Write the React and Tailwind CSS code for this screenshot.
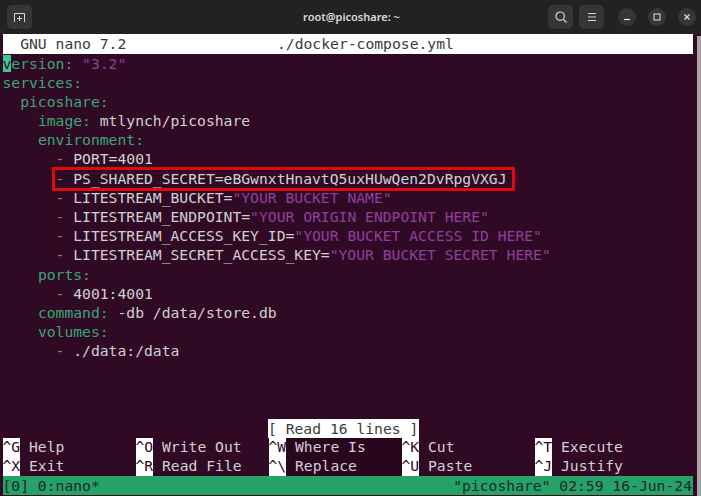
const keys = "text-[#3aa578]";
const str = "text-[#8f3f9e]";
const dash = "text-[#b8763f]";

function Row({ children, className = "" }) {
  return <div className={`h-[19.2px] leading-[19.2px] whitespace-pre ${className}`}>{children}</div>;
}

function Yaml({ indent = 0, name, value }) {
  return (
    <Row>
      {" ".repeat(indent)}
      <span className={keys}>{name}</span>
      {value}
    </Row>
  );
}

function Item({ name, value }) {
  return (
    <Row>
      {"      "}
      <span className={dash}>-</span>
      {" " + name}
      {value && <span className={str}>{value}</span>}
    </Row>
  );
}

function Shortcut({ k, label, labelClass = "" }) {
  return (
    <div className="flex w-[133px]">
      <span className="w-[17.7px] shrink-0 bg-white text-[#300a24]">{k}</span>
      <span className={`w-[115.3px] pl-[8.85px] ${labelClass}`}>{label}</span>
    </div>
  );
}

function TitleButton({ children }) {
  return (
    <button className="flex h-[24px] w-[25px] items-center justify-center rounded-[5px] bg-[#363636] text-[#d8d8d8]">
      {children}
    </button>
  );
}

function WindowButton({ children }) {
  return (
    <button className="flex h-[18px] w-[18px] items-center justify-center rounded-full bg-[#363636] text-[#e0e0e0]">
      {children}
    </button>
  );
}

export default function App() {
  return (
    <div className="flex h-[496px] w-[701px] flex-col overflow-hidden bg-[#222222] font-['Liberation_Sans',sans-serif]">
      <header className="flex h-[34px] shrink-0 items-center pl-[7px] pr-[5px]">
        <div className="flex flex-1">
          <TitleButton>
            <svg width="13" height="13" viewBox="0 0 13 13" fill="none" stroke="currentColor" strokeWidth="1">
              <path d="M1.5 11V2.5h10V11M6.5 5v5M4 7.5h5" />
            </svg>
          </TitleButton>
        </div>
        <span className="font-['Noto_Sans',sans-serif] text-[11px] font-semibold text-[#dcdcdc]">root@picoshare: ~</span>
        <div className="flex flex-1 items-center justify-end">
          <TitleButton>
            <svg width="14" height="14" viewBox="0 0 14 14" fill="none" stroke="currentColor" strokeWidth="1.2">
              <circle cx="6.2" cy="6.2" r="4.2" />
              <path d="M9.5 9.5l3 3" />
            </svg>
          </TitleButton>
          <div className="w-[6px]" />
          <TitleButton>
            <svg width="12" height="12" viewBox="0 0 12 12" fill="none" stroke="currentColor" strokeWidth="1.1">
              <path d="M2 2.5h8M2 6h8M2 9.5h8" />
            </svg>
          </TitleButton>
          <div className="w-[14px]" />
          <WindowButton>
            <svg width="10" height="10" viewBox="0 0 10 10" fill="none" stroke="currentColor" strokeWidth="1.2">
              <path d="M2 7.5h6" />
            </svg>
          </WindowButton>
          <div className="w-[12px]" />
          <WindowButton>
            <svg width="10" height="10" viewBox="0 0 10 10" fill="none" stroke="currentColor" strokeWidth="1">
              <rect x="2" y="2" width="6" height="6" />
            </svg>
          </WindowButton>
          <div className="w-[12px]" />
          <WindowButton>
            <svg width="10" height="10" viewBox="0 0 10 10" fill="none" stroke="currentColor" strokeWidth="1.3">
              <path d="M2.5 2.5l5 5M7.5 2.5l-5 5" />
            </svg>
          </WindowButton>
        </div>
      </header>

      <main className="relative flex flex-1 bg-[#300a24] pb-[1px] pl-[2.5px] font-['DejaVu_Sans_Mono',monospace] text-[14.7px] text-[#d3cfd2]">
        <div className="flex w-[690.5px] flex-col">
          <div className="flex h-[19.5px] shrink-0 items-center whitespace-pre bg-white text-[#3b3b3b]">
            <span className="w-[274.5px] pl-[17.7px]">GNU nano 7.2</span>
            <span>./docker-compose.yml</span>
          </div>

          <Row>
            <span className="bg-[#3fc78e] text-[#300a24]">v</span>
            <span className={keys}>ersion:</span>
            <span className={str}> "3.2"</span>
          </Row>
          <Yaml name="services:" />
          <Yaml indent={2} name="picoshare:" />
          <Yaml indent={4} name="image:" value=" mtlynch/picoshare" />
          <Yaml indent={4} name="environment:" />
          <Item name="PORT=4001" />
          <Item name="PS_SHARED_SECRET=eBGwnxtHnavtQ5uxHUwQen2DvRpgVXGJ" />
          <Item name="LITESTREAM_BUCKET=" value={'"YOUR BUCKET NAME"'} />
          <Item name="LITESTREAM_ENDPOINT=" value={'"YOUR ORIGIN ENDPOINT HERE"'} />
          <Item name="LITESTREAM_ACCESS_KEY_ID=" value={'"YOUR BUCKET ACCESS ID HERE"'} />
          <Item name="LITESTREAM_SECRET_ACCESS_KEY=" value={'"YOUR BUCKET SECRET HERE"'} />
          <Yaml indent={4} name="ports:" />
          <Item name="4001:4001" />
          <Yaml indent={4} name="command:" value=" -db /data/store.db" />
          <Yaml indent={4} name="volumes:" />
          <Item name="./data:/data" />

          <div className="flex-1" />

          <div className="h-[19.2px] pl-[265.5px] leading-[19.2px]">
            <span className="block w-[150.5px] whitespace-pre bg-white text-[#3b3b3b]">[ Read 16 lines ]</span>
          </div>
          <div className="flex h-[19px] leading-[18px] whitespace-pre">
            <Shortcut k="^G" label="Help" />
            <Shortcut k="^O" label="Write Out" />
            <Shortcut k="^W" label="Where Is" labelClass="bg-[#29061e]" />
            <Shortcut k="^K" label="Cut" />
            <Shortcut k="^T" label="Execute" />
          </div>
          <div className="flex h-[19px] leading-[18px] whitespace-pre">
            <Shortcut k="^X" label="Exit" />
            <Shortcut k="^R" label="Read File" />
            <Shortcut k="^\" label="Replace" labelClass="bg-[#29061e]" />
            <Shortcut k="^U" label="Paste" />
            <Shortcut k="^J" label="Justify" />
          </div>
          <div className="flex h-[19px] justify-between bg-[#26a269] pr-[1px] leading-[19px] whitespace-pre text-[#172a22]">
            <span>[0] 0:nano*</span>
            <span>"picoshare" 02:59 16-Jun-24</span>
          </div>
        </div>
        <div className="ml-auto mt-[2px] mb-[-1px] w-[4.5px] bg-[#a8a3a5]" />

        <div className="absolute left-[52px] top-[133px] h-[24px] w-[463px] border-[3px] border-[#e00a0a]" />
      </main>
    </div>
  );
}
